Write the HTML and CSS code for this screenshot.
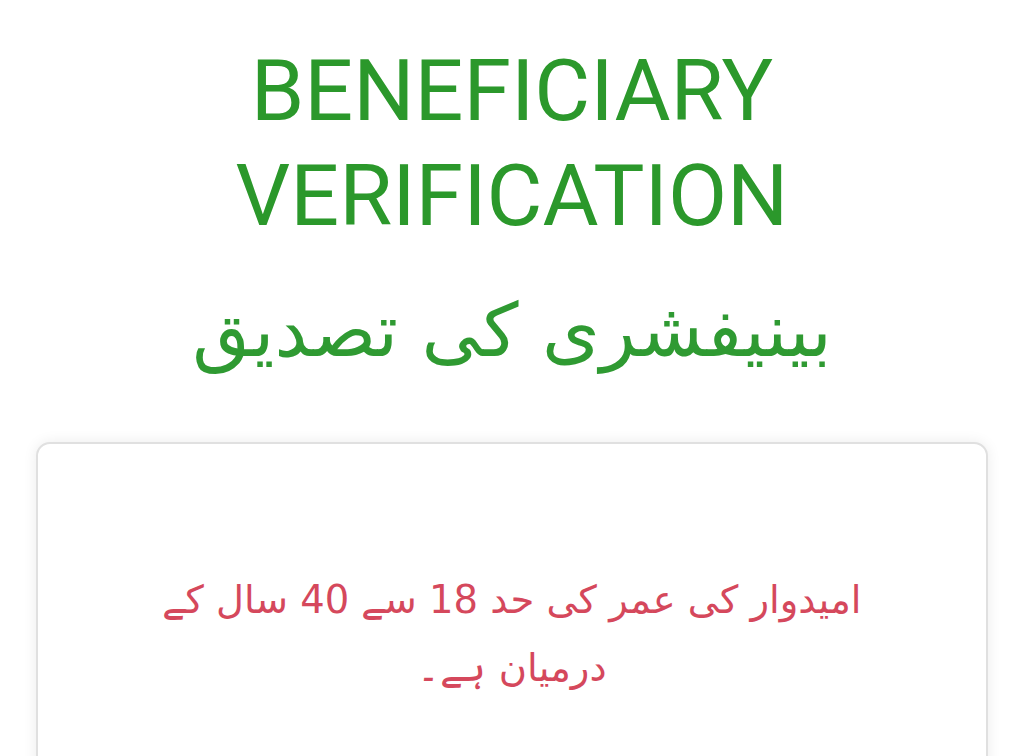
FILE: index.html
```html
<!DOCTYPE html>
<html lang="en">
<head>
<meta charset="utf-8">
<link rel="stylesheet" href="styles.css">
</head>
<body>
<main class="page">
  <header class="heading">
    <h1 class="title">BENEFICIARY<br>VERIFICATION</h1>
    <h2 class="title-ur" dir="rtl" lang="ur">بینیفشری کی تصدیق</h2>
  </header>
  <section class="card">
    <p class="notice" dir="rtl" lang="ur">امیدوار کی عمر کی حد 18 سے 40 سال کے درمیان ہے۔</p>
  </section>
</main>
</body>
</html>
```

FILE: styles.css
```css
html, body {
  margin: 0;
  padding: 0;
  background: #ffffff;
}
body {
  width: 1024px;
  height: 756px;
  overflow: hidden;
  font-family: Roboto, "DejaVu Sans", sans-serif;
}
.page {
  display: flex;
  flex-direction: column;
  align-items: stretch;
  padding: 0 36px;
}
.heading {
  display: flex;
  flex-direction: column;
  align-items: center;
  padding-top: 38px;
}
.title {
  margin: 0;
  font-family: Roboto, sans-serif;
  font-weight: 400;
  font-size: 86px;
  line-height: 105px;
  color: #2b982b;
  text-align: center;
  letter-spacing: 0;
}
.title-ur {
  margin: 27px 0 0;
  font-family: "DejaVu Sans", sans-serif;
  font-weight: 400;
  font-size: 74px;
  line-height: 110px;
  color: #2f9a32;
  text-align: center;
}
.card {
  margin-top: 57px;
  height: 400px;
  background: #fff;
  border: 2px solid #e0e0e0;
  border-radius: 14px;
  box-shadow: 0 0 14px rgba(0,0,0,0.08);
  padding: 122px 100px 0;
}
.notice {
  margin: 0;
  font-family: "DejaVu Sans", sans-serif;
  font-size: 38.5px;
  line-height: 68px;
  color: #d5485c;
  text-align: center;
}
```
